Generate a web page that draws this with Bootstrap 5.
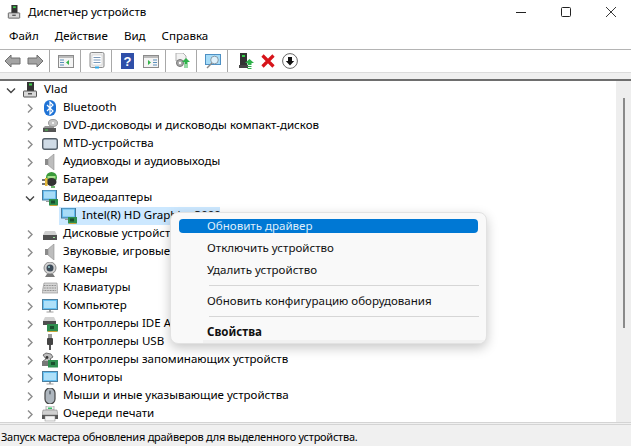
<!doctype html>
<html lang="ru"><head><meta charset="utf-8">
<link href="https://cdn.jsdelivr.net/npm/bootstrap@5.3.0/dist/css/bootstrap.min.css" rel="stylesheet">
<style>
html,body{height:100%}
body{width:631px;height:446px;overflow:hidden;background:#fff;color:#000;font-family:"Noto Sans","Open Sans",sans-serif;font-size:11.55px;line-height:18px;position:relative}
svg{display:block;flex:none}
.titlebar{height:25px;padding-left:7px}
.titlebar .title{margin-left:7px}
.winbtns{gap:35px;padding-right:15px}
.menubar{height:24px;padding-left:9px;gap:16px;padding-bottom:1px}
.toolbar{height:24px;border-top:1px solid #b4b4b4;border-bottom:1px solid #dcdcdc;padding-left:4px}
.tsep{width:1px;height:22px;background:#a8a8a8;margin:0 8px 0 5px}
.tb-f{margin-left:6px}.tb-h{margin-left:1px}.tb-a{margin-left:8px}.tb-g{margin-left:7px}.tb-last{margin-right:11px}
.tsep.s6{margin-left:6px}
.band{height:8px;background:#f0f0f0;border-bottom:2px solid #6e6e6e}
.tree{flex:1;min-width:0;overflow:hidden}
.tree li{height:18px;white-space:nowrap}
.tree li span{margin-bottom:2px}
.l0{padding-left:3px}.l0 .ico{margin-left:3px;margin-right:6px}
.l1{padding-left:22px}.l1 .ico{margin-left:4px;margin-right:5px}
.l2{margin-left:59px;width:161px;padding-left:2px;background:#cce8ff}
.l2 .ico{margin-right:5px}
.sb{width:15px;background:#eeeeee;position:relative}
.sb i{display:block;width:2px;height:230px;background:#8a8a8a;margin:17px 0 0 7px}
.status{height:24px;background:#f0f0f0;border-top:3px double #d4d4d4;padding-left:1px;line-height:24px;font-size:11px;letter-spacing:-.25px}
.ctx{display:block;position:absolute;left:170px;top:212px;width:317px;height:132px;border:1px solid #e2e2e2;border-radius:8px;background:#f9f9f9;box-shadow:0 4px 12px rgba(0,0,0,.22);padding:0;font-size:11.55px;margin:0;overflow:hidden}
.ctx .dropdown-item{position:absolute;left:36px;width:auto;padding:0;line-height:18px;color:#111;background:none}
.ctx .hl{position:absolute;left:8px;top:6px;width:299px;height:14px;background:#0078d4;border-radius:4px}
.ctx .dropdown-divider{position:absolute;left:38px;width:270px;margin:0;border-color:#d6d6d6;opacity:1}
.ctx .foot{position:absolute;left:32px;right:1px;top:127px;height:3px;background:#f1f1f1}
.ctx .active-t{color:#dfeefb}
</style></head><body>
<svg width="0" height="0" class="position-absolute">
<defs>
<symbol id="pc" viewBox="0 0 16 16"><rect x="5" y="0" width="7" height="10" fill="#333"/><rect x="7" y="1.5" width="3" height="2" fill="#3ecf4a"/><rect x="1.5" y="9" width="13" height="6" rx=".5" fill="#d8d8d8" stroke="#555"/><rect x="6" y="11" width="4" height="1.5" fill="#555"/></symbol>
<symbol id="bt" viewBox="0 0 16 16"><rect x="2" y="0" width="12" height="16" rx="6" fill="#1f73d6"/><path d="M5 5l6 6-3 3V2l3 3-6 6" fill="none" stroke="#fff" stroke-width="1.2"/></symbol>
<symbol id="dvd" viewBox="0 0 16 16"><ellipse cx="11" cy="5" rx="4.5" ry="3.5" fill="#c4c4c4" stroke="#999"/><circle cx="11" cy="5" r="1" fill="#fff"/><path d="M1 10l2-2h9v2z" fill="#999"/><rect x="1" y="10" width="13" height="4" fill="#555"/><rect x="3" y="11.5" width="3" height="1" fill="#4ccf50"/></symbol>
<symbol id="mtd" viewBox="0 0 16 16"><rect x=".7" y="2.7" width="14.6" height="10.6" rx="2" fill="#cfdbe6" stroke="#55606a" stroke-width="1.4"/></symbol>
<symbol id="spk" viewBox="0 0 16 16"><rect x="3" y="5" width="3" height="6" fill="#8a8a8a"/><path d="M6 5l6-5v16l-6-5z" fill="#bdbdbd" stroke="#8f8f8f" stroke-width=".6"/></symbol>
<symbol id="bat" viewBox="0 0 16 16"><circle cx="9.500" cy="5.500" r="5.500" fill="#3a9a3a"/><path d="M5.500 4h8v2.500h-8z" fill="#a6e08c"/><ellipse cx="9.500" cy="10" rx="5" ry="4" fill="#333"/><path d="M9 15l4 0" stroke="#3a9a3a" stroke-width="1.500"/><path d="M0 8h5M0 12h5" stroke="#444" stroke-width="1.3"/><path d="M3 6h2.500v8H3z" fill="#e4b93c"/></symbol>
<symbol id="vid" viewBox="0 0 16 16"><rect x=".5" y="0" width="14" height="10" fill="#5fb8ee" stroke="#4a7a9a"/><rect x="2" y="1.500" width="11" height="7" fill="#a8dcf7"/><path d="M4 11h6v1H4z" fill="#999"/><rect x="7" y="9" width="9" height="6.500" fill="#2f8f4f"/><rect x="9" y="10.500" width="4" height="3" fill="#1a4f2d"/><path d="M8 15.500h7" stroke="#c9a53a"/></symbol>
<symbol id="hdd" viewBox="0 0 16 16"><path d="M3 5h10l2 4H1z" fill="#cfcfcf"/><rect x="1" y="9" width="14" height="5" fill="#4f4f4f"/><rect x="11" y="11" width="2" height="1" fill="#9ee39e"/></symbol>
<symbol id="cam" viewBox="0 0 16 16"><circle cx="8" cy="6" r="6" fill="#d2d2d2" stroke="#888"/><circle cx="8" cy="6" r="3.500" fill="#3c4a58"/><circle cx="7" cy="5" r="1" fill="#9cc"/><path d="M5 12h6l2 3H3z" fill="#777"/></symbol>
<symbol id="kbd" viewBox="0 0 16 16"><path d="M2 3h13l1 10H0z" fill="#d6d6d6" stroke="#8c8c8c" stroke-width=".6"/><path d="M2 5.500h12M1.800 8h12.400M1.500 10.500h13" stroke="#8a8a8a" stroke-dasharray="1 .6"/></symbol>
<symbol id="mon" viewBox="0 0 16 16"><rect x=".5" y="1.500" width="15" height="10" fill="#64c0f2" stroke="#4e7f9e"/><rect x="2" y="3" width="12" height="7" fill="#aee0f9"/><path d="M7 12h2v1.500H7zM4.500 13.500h7v1h-7z" fill="#a0a0a0"/></symbol>
<symbol id="ide" viewBox="0 0 16 16"><path d="M3 1h9l2 4H1z" fill="#d2d2d2"/><rect x="1" y="5" width="13" height="4" fill="#4f4f4f"/><rect x="5" y="8" width="11" height="7.500" fill="#2f8f4f"/><rect x="8" y="10" width="4" height="3" fill="#1a4f2d"/><path d="M6 15.500h9" stroke="#c9a53a"/></symbol>
<symbol id="usb" viewBox="0 0 16 16"><rect x="6" y="0" width="4" height="4" fill="#9a9a9a"/><rect x="5" y="4" width="6" height="7" rx="1" fill="#444"/><path d="M8 11v5" stroke="#555" stroke-width="2"/></symbol>
<symbol id="sto" viewBox="0 0 16 16"><path d="M1 3l3-2 5 1 2 3-3 2 2 2-3 2H3L1 9l3-2z" fill="#bcbcbc" stroke="#555" stroke-width=".8"/><circle cx="5" cy="5.500" r="1.400" fill="#333"/><rect x="0" y="9" width="8" height="5" fill="#777"/><rect x="6" y="8" width="10" height="7.500" fill="#2f8f4f"/><rect x="9" y="10" width="4" height="3" fill="#1a4f2d"/></symbol>
<symbol id="mou" viewBox="0 0 16 16"><rect x="3" y="0" width="10" height="16" rx="5" fill="#aeb6be" stroke="#444" stroke-width="1.200"/><rect x="7" y="2.500" width="2" height="4" rx="1" fill="#6c747c"/></symbol>
<symbol id="prn" viewBox="0 0 16 16"><rect x="4" y="0" width="8" height="4" fill="#f2f2f2" stroke="#888" stroke-width=".6"/><path d="M1 4h14l1 5H0z" fill="#d0d0d0" stroke="#777" stroke-width=".5"/><rect x="0" y="9" width="16" height="4" fill="#555"/><rect x="3" y="10" width="10" height="5" fill="#f4f4f4" stroke="#888" stroke-width=".5"/><rect x="6" y="1.500" width="4" height="1.500" fill="#38c06a"/></symbol>
<symbol id="right" viewBox="0 0 16 16"><path d="M6 4.500l4 4-4 4" fill="none" stroke="#8c8c8c" stroke-width="1.400"/></symbol>
<symbol id="down" viewBox="0 0 16 16"><path d="M4 6.500l4 4 4-4" fill="none" stroke="#444" stroke-width="1.400"/></symbol>
</defs></svg>

<div class="d-flex flex-column h-100">
<header class="titlebar d-flex align-items-center justify-content-between">
<div class="d-flex align-items-center"><svg width="14" height="16"><use href="#pc"/></svg><span class="title">Диспетчер устройств</span></div>
<div class="winbtns d-flex align-items-center">
<svg width="10" height="10" viewBox="0 0 10 10"><path d="M0 5.500h10" stroke="#222"/></svg>
<svg width="10" height="10" viewBox="0 0 10 10"><rect x=".5" y=".5" width="9" height="9" rx="1" fill="none" stroke="#222"/></svg>
<svg width="10" height="10" viewBox="0 0 10 10"><path d="M0 0l10 10M10 0L0 10" stroke="#222" stroke-width=".9"/></svg>
</div></header>
<nav class="menubar d-flex align-items-center"><span>Файл</span><span>Действие</span><span>Вид</span><span>Справка</span></nav>
<div class="toolbar d-flex align-items-center">
<svg width="17" height="14" viewBox="0 0 17 14"><path d="M1 7l6-6v3h9v6H7v3z" fill="#a3a3a3" stroke="#6f6f6f"/></svg>
<svg class="tb-f" width="17" height="14" viewBox="0 0 17 14"><path d="M16 7l-6-6v3H1v6h9v3z" fill="#a3a3a3" stroke="#6f6f6f"/></svg>
<span class="tsep"></span>
<svg width="16" height="16" viewBox="0 0 16 16"><rect x=".5" y="2.500" width="15" height="12" fill="#f4f4f4" stroke="#8b8b8b"/><rect x="1" y="3" width="14" height="2" fill="#bbb"/><path d="M11 7v5L8 9.500z" fill="#35b34a"/><path d="M2 7h4M2 9.500h4M2 12h4" stroke="#5a8fbb"/></svg>
<span class="tsep s6"></span>
<svg width="16" height="17" viewBox="0 0 16 17"><rect x="1" y=".5" width="14" height="15" rx="1.500" fill="#eee" stroke="#8a8a8a"/><rect x="3" y="3" width="10" height="10" fill="#fff" stroke="#bbb" stroke-width=".5"/><path d="M4.500 5.500h7M4.500 8h7M4.500 10.500h7" stroke="#7a98b8"/><rect x="6" y="14.500" width="4" height="2" fill="#2fa8e8"/></svg>
<span class="tsep s6"></span>
<svg class="tb-h" width="14" height="16" viewBox="0 0 14 16"><rect width="13" height="16" fill="#2f4fa8"/><text x="6.500" y="13" text-anchor="middle" font-family="Liberation Sans" font-weight="700" font-size="13" fill="#fff">?</text></svg>
<svg class="tb-a" width="16" height="16" viewBox="0 0 16 16"><rect x=".5" y="2.500" width="15" height="12" fill="#f4f4f4" stroke="#8b8b8b"/><rect x="1" y="3" width="14" height="2" fill="#bbb"/><path d="M5 7v5l3-2.500z" fill="#35b34a"/><path d="M10 7h4M10 9.500h4M10 12h4" stroke="#5a8fbb"/></svg>
<span class="tsep s6"></span>
<svg width="16" height="16" viewBox="0 0 16 16"><path d="M2 0h7l3 3v5H2z" fill="#f2f2f2" stroke="#b0b0b0"/><circle cx="6" cy="10" r="3.500" fill="#a8a8a8" stroke="#777"/><circle cx="6" cy="10" r="1.200" fill="#fff"/><path d="M12 5l4 4h-2.500v2h-3V9H8z" fill="#2fb14a"/><path d="M10 12h4M10 14h4" stroke="#2fb14a" stroke-width="1.200"/></svg>
<span class="tsep s6"></span>
<svg width="16" height="16" viewBox="0 0 16 16"><rect x=".5" y="1.500" width="15" height="10" fill="#a6dcf8" stroke="#4d90c4"/><circle cx="9.500" cy="7" r="3.800" fill="#dff1fb" stroke="#8a9aa6"/><path d="M7 10l-5 5" stroke="#8a8a8a" stroke-width="1.400"/></svg>
<span class="tsep s6 tb-last"></span>
<svg width="15" height="16" viewBox="0 0 15 16"><rect x="1" y="0" width="7" height="12" fill="#333"/><rect x="3" y="2" width="3" height="2" fill="#36d04a"/><rect x="0" y="12" width="9" height="3" fill="#444"/><path d="M10.500 6l4.500 4h-2.500v2h-4v-2H6z" fill="#2fb14a"/><path d="M8.500 13.500h4M8.500 15.500h4" stroke="#2fb14a"/></svg>
<svg class="tb-g" width="14" height="14" viewBox="0 0 14 14"><path d="M1.500 1.500l11 11M12.500 1.500l-11 11" stroke="#d7141a" stroke-width="3.200"/></svg>
<svg class="tb-g" width="16" height="16" viewBox="0 0 16 16"><circle cx="8" cy="8" r="7.400" fill="#fff" stroke="#666"/><path d="M8 12.500L3.800 8H6V4h4v4h2.200z" fill="#111"/></svg>
</div>
<div class="band"></div>
<main class="d-flex flex-grow-1" style="min-height:0">
<ul class="tree list-unstyled m-0">
<li class="l0 d-flex align-items-center"><svg width="16" height="16"><use href="#down"/></svg><svg class="ico" width="16" height="16"><use href="#pc"/></svg><span>Vlad</span></li>
<li class="l1 d-flex align-items-center"><svg width="16" height="16"><use href="#right"/></svg><svg class="ico" width="16" height="16"><use href="#bt"/></svg><span>Bluetooth</span></li>
<li class="l1 d-flex align-items-center"><svg width="16" height="16"><use href="#right"/></svg><svg class="ico" width="16" height="16"><use href="#dvd"/></svg><span>DVD-дисководы и дисководы компакт-дисков</span></li>
<li class="l1 d-flex align-items-center"><svg width="16" height="16"><use href="#right"/></svg><svg class="ico" width="16" height="16"><use href="#mtd"/></svg><span>MTD-устройства</span></li>
<li class="l1 d-flex align-items-center"><svg width="16" height="16"><use href="#right"/></svg><svg class="ico" width="16" height="16"><use href="#spk"/></svg><span>Аудиовходы и аудиовыходы</span></li>
<li class="l1 d-flex align-items-center"><svg width="16" height="16"><use href="#right"/></svg><svg class="ico" width="16" height="16"><use href="#bat"/></svg><span>Батареи</span></li>
<li class="l1 d-flex align-items-center"><svg width="16" height="16"><use href="#down"/></svg><svg class="ico" width="16" height="16"><use href="#vid"/></svg><span>Видеоадаптеры</span></li>
<li class="l2 d-flex align-items-center"><svg class="ico" width="16" height="16"><use href="#vid"/></svg><span>Intel(R) HD Graphics 3000</span></li>
<li class="l1 d-flex align-items-center"><svg width="16" height="16"><use href="#right"/></svg><svg class="ico" width="16" height="16"><use href="#hdd"/></svg><span>Дисковые устройства</span></li>
<li class="l1 d-flex align-items-center"><svg width="16" height="16"><use href="#right"/></svg><svg class="ico" width="16" height="16"><use href="#spk"/></svg><span>Звуковые, игровые и видеоустройства</span></li>
<li class="l1 d-flex align-items-center"><svg width="16" height="16"><use href="#right"/></svg><svg class="ico" width="16" height="16"><use href="#cam"/></svg><span>Камеры</span></li>
<li class="l1 d-flex align-items-center"><svg width="16" height="16"><use href="#right"/></svg><svg class="ico" width="16" height="16"><use href="#kbd"/></svg><span>Клавиатуры</span></li>
<li class="l1 d-flex align-items-center"><svg width="16" height="16"><use href="#right"/></svg><svg class="ico" width="16" height="16"><use href="#mon"/></svg><span>Компьютер</span></li>
<li class="l1 d-flex align-items-center"><svg width="16" height="16"><use href="#right"/></svg><svg class="ico" width="16" height="16"><use href="#ide"/></svg><span>Контроллеры IDE ATA/ATAPI</span></li>
<li class="l1 d-flex align-items-center"><svg width="16" height="16"><use href="#right"/></svg><svg class="ico" width="16" height="16"><use href="#usb"/></svg><span>Контроллеры USB</span></li>
<li class="l1 d-flex align-items-center"><svg width="16" height="16"><use href="#right"/></svg><svg class="ico" width="16" height="16"><use href="#sto"/></svg><span>Контроллеры запоминающих устройств</span></li>
<li class="l1 d-flex align-items-center"><svg width="16" height="16"><use href="#right"/></svg><svg class="ico" width="16" height="16"><use href="#mon"/></svg><span>Мониторы</span></li>
<li class="l1 d-flex align-items-center"><svg width="16" height="16"><use href="#right"/></svg><svg class="ico" width="16" height="16"><use href="#mou"/></svg><span>Мыши и иные указывающие устройства</span></li>
<li class="l1 d-flex align-items-center"><svg width="16" height="16"><use href="#right"/></svg><svg class="ico" width="16" height="16"><use href="#prn"/></svg><span>Очереди печати</span></li>
</ul>
<div class="sb"><i></i></div>
</main>
<footer class="status">Запуск мастера обновления драйверов для выделенного устройства.</footer>
</div>
<div class="dropdown-menu ctx">
<span class="hl"></span>
<a class="dropdown-item active-t" style="top:4px">Обновить драйвер</a>
<a class="dropdown-item" style="top:26px">Отключить устройство</a>
<a class="dropdown-item" style="top:48px">Удалить устройство</a>
<hr class="dropdown-divider" style="top:72px">
<a class="dropdown-item" style="top:79px">Обновить конфигурацию оборудования</a>
<hr class="dropdown-divider" style="top:103px">
<a class="dropdown-item fw-bold" style="top:110px">Свойства</a>
<span class="foot"></span>
</div>
</body></html>
